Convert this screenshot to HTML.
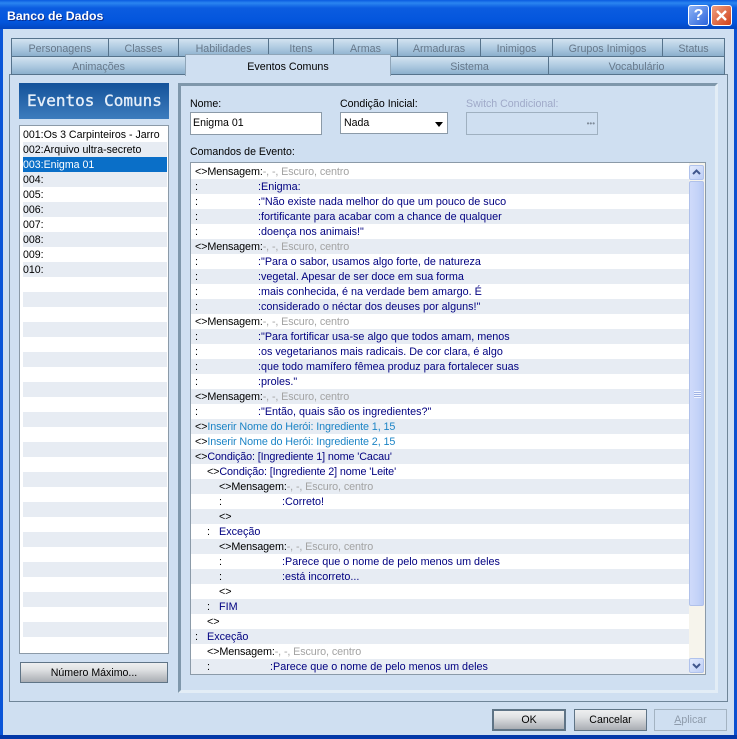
<!DOCTYPE html>
<html><head><meta charset="utf-8"><style>
*{box-sizing:border-box}
html,body{margin:0;padding:0;width:737px;height:739px;overflow:hidden;background:#cfdff1;font:10.6px "Liberation Sans",sans-serif;color:#000}
.a{position:absolute;white-space:nowrap}
.tab{position:absolute;text-align:center;color:#66788a;font-size:10.7px;line-height:20px;height:19px;border:1px solid #56738c;background:linear-gradient(#d3e3f1,#a9c6de 60%,#8cafcc)}
.tab.b{line-height:21px}
.btn{position:absolute;text-align:center;border:1px solid #5f7486;background:linear-gradient(#eeeff0,#dfe1e3 35%,#a9adb3);line-height:20px;height:21px;font-size:10.6px}
.r{position:absolute;left:0;width:499px;height:15px;line-height:16px;font-size:10.8px;color:#000080}
.r.s{background:#e7ecf3}
.r span{position:absolute;top:0;white-space:nowrap}
.k{color:#000}.g{color:#a3a3a3}.t{color:#1c84c6}
.m{letter-spacing:-.12px}
.l{position:absolute;left:3px;width:144px;height:15px;line-height:16px;padding-left:0;font-size:10.6px;color:#000}
.l.s{background:#e7ecf3}
</style></head><body>
<div class="a" style="left:0;top:0;width:737px;height:29px;background:linear-gradient(#0a5be0 0,#2a85f0 3px,#0b5ce0 8px,#0355dc 22px,#0346c0 29px)"></div>
<div class="a" style="left:7px;top:9px;color:#fff;font:bold 12.3px 'Liberation Sans',sans-serif;text-shadow:1px 1px 0 #0a2f90">Banco de Dados</div>
<div class="a" style="left:688px;top:5px;width:21px;height:21px;border:1px solid #fff;border-radius:3px;background:linear-gradient(135deg,#8fb4f5,#2a63dc);color:#fff;font:bold 16px/19px 'Liberation Sans',sans-serif;text-align:center">?</div>
<div class="a" style="left:711px;top:5px;width:21px;height:21px;border:1px solid #fff;border-radius:3px;background:linear-gradient(135deg,#f0a080,#d0401a)"><svg width="19" height="19" style="position:absolute;left:0;top:0"><path d="M5 5L14 14M14 5L5 14" stroke="#fff" stroke-width="2.4"/></svg></div>
<div class="a" style="left:0;top:29px;width:3px;height:710px;background:#0a55d8"></div>
<div class="a" style="left:734px;top:29px;width:3px;height:710px;background:#0a50d0"></div>
<div class="a" style="left:0;top:735px;width:737px;height:4px;background:#0338a8"></div>

<div class="a" style="left:9px;top:74px;width:719px;height:628px;border:1px solid #6f8598;background:#cfdff1"></div>

<div class="tab" style="left:11px;top:38px;width:98px">Personagens</div>
<div class="tab" style="left:108px;top:38px;width:71px">Classes</div>
<div class="tab" style="left:178px;top:38px;width:91px">Habilidades</div>
<div class="tab" style="left:268px;top:38px;width:66px">Itens</div>
<div class="tab" style="left:333px;top:38px;width:65px">Armas</div>
<div class="tab" style="left:397px;top:38px;width:84px">Armaduras</div>
<div class="tab" style="left:480px;top:38px;width:73px">Inimigos</div>
<div class="tab" style="left:552px;top:38px;width:111px">Grupos Inimigos</div>
<div class="tab" style="left:662px;top:38px;width:63px">Status</div>
<div class="tab b" style="left:11px;top:56px;width:175px">Animações</div>
<div class="tab b" style="left:390px;top:56px;width:159px">Sistema</div>
<div class="tab b" style="left:548px;top:56px;width:177px">Vocabulário</div>
<div class="a" style="left:185px;top:54px;width:206px;height:22px;background:#cfdff1;border:1px solid #8fa5b8;border-bottom:0;text-align:center;line-height:25px;font-size:10.7px">Eventos Comuns</div>

<div class="a" style="left:19px;top:83px;width:150px;height:36px;background:linear-gradient(#14529a,#3d7cbd);color:#e6eff9;font:16px/35px 'DejaVu Sans Mono',monospace;padding-left:8px;-webkit-text-stroke:.35px #e6eff9">Eventos Comuns</div>

<div class="a" style="left:19px;top:125px;width:150px;height:529px;border:1px solid #8b9aa8;background:#fff;overflow:hidden">
<div class="l" style="top:1px">001:Os 3 Carpinteiros - Jarro</div>
<div class="l s" style="top:16px">002:Arquivo ultra-secreto</div>
<div class="l" style="top:31px;background:#0a6fc8;color:#fff">003:Enigma 01</div>
<div class="l s" style="top:46px">004:</div>
<div class="l" style="top:61px">005:</div>
<div class="l s" style="top:76px">006:</div>
<div class="l" style="top:91px">007:</div>
<div class="l s" style="top:106px">008:</div>
<div class="l" style="top:121px">009:</div>
<div class="l s" style="top:136px">010:</div>
<div class="l s" style="top:166px"></div><div class="l s" style="top:196px"></div><div class="l s" style="top:226px"></div><div class="l s" style="top:256px"></div><div class="l s" style="top:286px"></div><div class="l s" style="top:316px"></div><div class="l s" style="top:346px"></div><div class="l s" style="top:376px"></div><div class="l s" style="top:406px"></div><div class="l s" style="top:436px"></div><div class="l s" style="top:466px"></div><div class="l s" style="top:496px"></div>
</div>
<div class="btn" style="left:20px;top:662px;width:148px">Número Máximo...</div>

<div class="a" style="left:178px;top:83px;width:540px;height:610px;border:3px solid #7f97ab;border-right:3px solid #e3edf6;border-bottom:3px solid #e3edf6"></div>

<div class="a" style="left:190px;top:98px">Nome:</div>
<div class="a" style="left:190px;top:112px;width:132px;height:23px;border:1px solid #8b9aa8;background:#fff;padding-left:2px;line-height:20px">Enigma 01</div>
<div class="a" style="left:340px;top:98px">Condição Inicial:</div>
<div class="a" style="left:340px;top:112px;width:108px;height:22px;border:1px solid #8b9aa8;background:#fff;padding-left:3px;line-height:21px">Nada<svg width="8" height="5" style="position:absolute;left:94px;top:9px"><path d="M0 0H8L4 5Z" fill="#000"/></svg></div>
<div class="a" style="left:466px;top:98px;color:#9fa9c8">Switch Condicional:</div>
<div class="a" style="left:466px;top:112px;width:132px;height:23px;border:1px solid #9fb0c0;background:#cfdff1;color:#7f8b99;text-align:right;padding-right:2px;line-height:21px;font-size:8px">•••</div>
<div class="a" style="left:190px;top:146px">Comandos de Evento:</div>

<div class="a" style="left:190px;top:162px;width:516px;height:513px;border:1px solid #8b9aa8;background:#fff;overflow:hidden">
<div class="r" style="top:1px"><span class="k m" style="left:4px">&lt;&gt;Mensagem:<span class="g" style="position:static">-, -, Escuro, centro</span></span></div>
<div class="r s" style="top:16px"><span class="k" style="left:4px">:</span><span style="left:67px">:Enigma:</span></div>
<div class="r" style="top:31px"><span class="k" style="left:4px">:</span><span style="left:67px">:"Não existe nada melhor do que um pouco de suco</span></div>
<div class="r s" style="top:46px"><span class="k" style="left:4px">:</span><span style="left:67px">:fortificante para acabar com a chance de qualquer</span></div>
<div class="r" style="top:61px"><span class="k" style="left:4px">:</span><span style="left:67px">:doença nos animais!"</span></div>
<div class="r s" style="top:76px"><span class="k m" style="left:4px">&lt;&gt;Mensagem:<span class="g" style="position:static">-, -, Escuro, centro</span></span></div>
<div class="r" style="top:91px"><span class="k" style="left:4px">:</span><span style="left:67px">:"Para o sabor, usamos algo forte, de natureza</span></div>
<div class="r s" style="top:106px"><span class="k" style="left:4px">:</span><span style="left:67px">:vegetal. Apesar de ser doce em sua forma</span></div>
<div class="r" style="top:121px"><span class="k" style="left:4px">:</span><span style="left:67px">:mais conhecida, é na verdade bem amargo. É</span></div>
<div class="r s" style="top:136px"><span class="k" style="left:4px">:</span><span style="left:67px">:considerado o néctar dos deuses por alguns!"</span></div>
<div class="r" style="top:151px"><span class="k m" style="left:4px">&lt;&gt;Mensagem:<span class="g" style="position:static">-, -, Escuro, centro</span></span></div>
<div class="r s" style="top:166px"><span class="k" style="left:4px">:</span><span style="left:67px">:"Para fortificar usa-se algo que todos amam, menos</span></div>
<div class="r" style="top:181px"><span class="k" style="left:4px">:</span><span style="left:67px">:os vegetarianos mais radicais. De cor clara, é algo</span></div>
<div class="r s" style="top:196px"><span class="k" style="left:4px">:</span><span style="left:67px">:que todo mamífero fêmea produz para fortalecer suas</span></div>
<div class="r" style="top:211px"><span class="k" style="left:4px">:</span><span style="left:67px">:proles."</span></div>
<div class="r s" style="top:226px"><span class="k m" style="left:4px">&lt;&gt;Mensagem:<span class="g" style="position:static">-, -, Escuro, centro</span></span></div>
<div class="r" style="top:241px"><span class="k" style="left:4px">:</span><span style="left:67px">:"Então, quais são os ingredientes?"</span></div>
<div class="r s" style="top:256px"><span class="k m" style="left:4px">&lt;&gt;<span class="t" style="position:static">Inserir Nome do Herói: Ingrediente 1, 15</span></span></div>
<div class="r" style="top:271px"><span class="k m" style="left:4px">&lt;&gt;<span class="t" style="position:static">Inserir Nome do Herói: Ingrediente 2, 15</span></span></div>
<div class="r s" style="top:286px"><span class="k m" style="left:4px">&lt;&gt;<span style="position:static;color:#000080">Condição: [Ingrediente 1] nome 'Cacau'</span></span></div>
<div class="r" style="top:301px"><span class="k m" style="left:16px">&lt;&gt;<span style="position:static;color:#000080">Condição: [Ingrediente 2] nome 'Leite'</span></span></div>
<div class="r s" style="top:316px"><span class="k m" style="left:28px">&lt;&gt;Mensagem:<span class="g" style="position:static">-, -, Escuro, centro</span></span></div>
<div class="r" style="top:331px"><span class="k" style="left:28px">:</span><span style="left:91px">:Correto!</span></div>
<div class="r s" style="top:346px"><span class="k" style="left:28px">&lt;&gt;</span></div>
<div class="r" style="top:361px"><span class="k" style="left:16px">:</span><span style="left:28px">Exceção</span></div>
<div class="r s" style="top:376px"><span class="k m" style="left:28px">&lt;&gt;Mensagem:<span class="g" style="position:static">-, -, Escuro, centro</span></span></div>
<div class="r" style="top:391px"><span class="k" style="left:28px">:</span><span style="left:91px">:Parece que o nome de pelo menos um deles</span></div>
<div class="r s" style="top:406px"><span class="k" style="left:28px">:</span><span style="left:91px">:está incorreto...</span></div>
<div class="r" style="top:421px"><span class="k" style="left:28px">&lt;&gt;</span></div>
<div class="r s" style="top:436px"><span class="k" style="left:16px">:</span><span style="left:28px">FIM</span></div>
<div class="r" style="top:451px"><span class="k" style="left:16px">&lt;&gt;</span></div>
<div class="r s" style="top:466px"><span class="k" style="left:4px">:</span><span style="left:16px">Exceção</span></div>
<div class="r" style="top:481px"><span class="k m" style="left:16px">&lt;&gt;Mensagem:<span class="g" style="position:static">-, -, Escuro, centro</span></span></div>
<div class="r s" style="top:496px"><span class="k" style="left:16px">:</span><span style="left:79px">:Parece que o nome de pelo menos um deles</span></div>
<div class="a" style="left:498px;top:0;width:16px;height:511px;background:#f6f4ec"></div>
<div class="a" style="left:498px;top:18px;width:15px;height:425px;background:linear-gradient(90deg,#cfdafa,#c4d3f8 60%,#b9c9f4);border:1px solid #b0c1ea;border-radius:2px"></div>
<div class="a" style="left:503px;top:228px;width:7px;height:7px;background:repeating-linear-gradient(#eef3fe 0,#eef3fe 1px,#9fb2e4 1px,#9fb2e4 2px)"></div>
<div class="a" style="left:498px;top:2px;width:15px;height:15px;background:linear-gradient(135deg,#e3ebfd,#bccdf6);border:1px solid #b0c2ec;border-radius:2px"><svg width="13" height="13" style="position:absolute;left:0;top:0"><path d="M3 8L6.5 4.5L10 8" fill="none" stroke="#40568c" stroke-width="2"/></svg></div>
<div class="a" style="left:498px;top:495px;width:15px;height:15px;background:linear-gradient(135deg,#e3ebfd,#bccdf6);border:1px solid #b0c2ec;border-radius:2px"><svg width="13" height="13" style="position:absolute;left:0;top:0"><path d="M3 5L6.5 8.5L10 5" fill="none" stroke="#40568c" stroke-width="2"/></svg></div>
</div>

<div class="btn" style="left:492px;top:709px;width:74px;height:22px;border:2px solid #5f7486;line-height:19px">OK</div>
<div class="btn" style="left:574px;top:709px;width:73px;height:22px;line-height:21px">Cancelar</div>
<div class="btn" style="left:654px;top:709px;width:73px;height:22px;line-height:21px;background:#cfdff1;border-color:#a3b3c2;color:#8e9bab"><u>A</u>plicar</div>
</body></html>
